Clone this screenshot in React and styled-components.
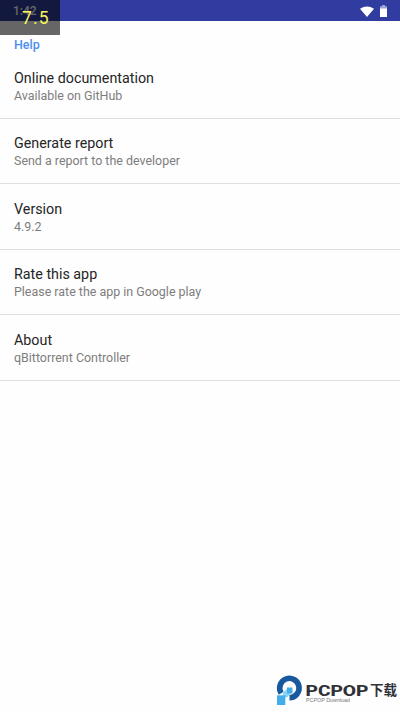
import React from "react";
import styled, { createGlobalStyle } from "styled-components";

const GlobalStyle = createGlobalStyle`
  * { box-sizing: border-box; }
  body { margin: 0; background: #fefefe; font-family: Roboto, sans-serif; }
`;

const Screen = styled.main`
  position: relative;
  width: 400px;
  height: 712px;
  overflow: hidden;
  background: #fefefe;
`;

const StatusBar = styled.header`
  display: flex;
  align-items: center;
  justify-content: space-between;
  height: 21px;
  padding: 1px 13px 0 13px;
  background: #303c9f;
`;

const Clock = styled.time`
  color: #fff;
  font-size: 12px;
  font-weight: 500;
`;

const StatusIcons = styled.div`
  display: flex;
  align-items: center;
  gap: 6px;
`;

const FrameRate = styled.div`
  position: absolute;
  top: 0;
  left: 0;
  width: 60px;
  height: 35px;
  padding: 8px 0 0 22px;
  background: rgba(0, 0, 0, 0.6);
  color: #f4f45c;
  font-size: 17.5px;
  line-height: 21px;
  letter-spacing: 1.2px;
`;

const SectionTitle = styled.h1`
  margin: 0;
  height: 32.3px;
  padding: 16px 14px 0;
  color: #4b8ff0;
  font-size: 12.5px;
  line-height: 15px;
  font-weight: 500;
`;

const List = styled.ul`
  margin: 0;
  padding: 0;
  list-style: none;
`;

const Item = styled.li`
  height: 65.5px;
  padding: 15.5px 14px 0;
  border-bottom: 1px solid #dfdfdf;
`;

const ItemTitle = styled.div`
  color: #252525;
  font-size: 14.3px;
  line-height: 18px;
`;

const ItemSummary = styled.div`
  color: #7d7d7d;
  font-size: 12.45px;
  line-height: 18px;
`;

const Watermark = styled.div`
  position: absolute;
  left: 270px;
  top: 668px;
  width: 130px;
  height: 44px;
`;

const items = [
  ["Online documentation", "Available on GitHub"],
  ["Generate report", "Send a report to the developer"],
  ["Version", "4.9.2"],
  ["Rate this app", "Please rate the app in Google play"],
  ["About", "qBittorrent Controller"],
];

function Logo() {
  return (
    <svg width="130" height="44" viewBox="0 0 130 44">
      <path d="M11.200 25.200A9.700 9.700 0 1 1 19.500 29.700" fill="none" stroke="#17589f" strokeWidth="5.600" />
      <path d="M13 24.500L17 21l4 4-3.500 4-4 1z" fill="#8bd2f5" />
      <path d="M17 19.500h5.500v6H17z" fill="#42adea" />
      <path d="M7 27.300h8.300V37H7z" fill="#42adea" />
      <text x="35.500" y="27.700" textLength="63" lengthAdjust="spacingAndGlyphs" fontFamily="Roboto, sans-serif" fontSize="14" fontWeight="800" fill="#303238">PCPOP</text>
      <text x="100" y="27" textLength="27" lengthAdjust="spacingAndGlyphs" fontFamily="'Noto Sans CJK SC', sans-serif" fontSize="13.200" fontWeight="700" fill="#303238">下载</text>
      <text x="36" y="33.500" textLength="44" lengthAdjust="spacingAndGlyphs" fontFamily="'Liberation Sans', sans-serif" fontSize="4.500" fill="#777">PCPOP Download</text>
    </svg>
  );
}

export default function App() {
  return (
    <Screen>
      <GlobalStyle />
      <StatusBar>
        <Clock>1:42</Clock>
        <StatusIcons>
          <svg width="14" height="11" viewBox="0 0 14 11">
            <path d="M0 2.800Q7-2 14 2.800L7 11Z" fill="#fff" />
          </svg>
          <svg width="7" height="12" viewBox="0 0 7 12">
            <path d="M2 0h3v1.300h2V12H0V1.300h2z" fill="#9da4d5" />
            <path d="M0 3.500h7V12H0z" fill="#fff" />
          </svg>
        </StatusIcons>
      </StatusBar>
      <FrameRate>7.5</FrameRate>
      <SectionTitle>Help</SectionTitle>
      <List>
        {items.map(([title, summary]) => (
          <Item key={title}>
            <ItemTitle>{title}</ItemTitle>
            <ItemSummary>{summary}</ItemSummary>
          </Item>
        ))}
      </List>
      <Watermark>
        <Logo />
      </Watermark>
    </Screen>
  );
}
